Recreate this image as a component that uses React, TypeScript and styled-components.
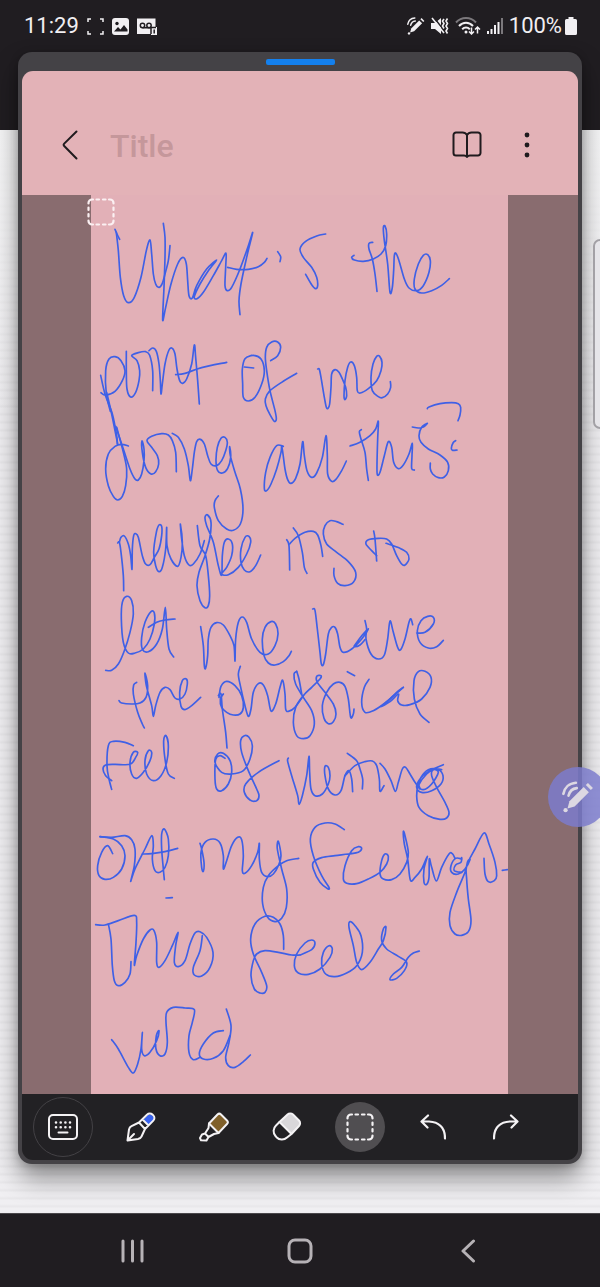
import React from "react";
import styled, { createGlobalStyle } from "styled-components";

const GlobalStyle = createGlobalStyle`
  *, *::before, *::after { box-sizing: border-box; }
  body { margin: 0; font-family: Roboto, "Noto Sans", sans-serif; background: #201d21; }
  button { border: 0; margin: 0; padding: 0; background: none; color: inherit; font: inherit; }
  svg { display: block; }
`;

const Screen = styled.div`
  position: relative;
  display: flex;
  flex-direction: column;
  min-height: 100vh;
  overflow: hidden;
  background:
    linear-gradient(#201d21, #201d21) top / 100% 130px no-repeat,
    linear-gradient(#f6f6f7 130px, rgba(246, 246, 247, 0) 420px),
    repeating-linear-gradient(#f0eff2 0 4px, #e9e8eb 6px 7px, #f0eff2 8px);
`;

const StatusBar = styled.header`
  display: flex;
  align-items: center;
  justify-content: space-between;
  height: 52px;
  padding: 0 23px 0 24px;
  color: #f1eff2;
  font-size: 22px;
  line-height: 26px;
`;

const StatusGroup = styled.div<{ $gap: number }>`
  display: flex;
  align-items: center;
  gap: ${(p) => p.$gap}px;
`;

const Battery = styled.span`
  display: flex;
  align-items: center;
  gap: 3px;
`;

const PopupWindow = styled.main`
  flex: 1;
  display: flex;
  flex-direction: column;
  margin: 0 18px;
  padding: 0 4px 4px;
  border-radius: 14px;
  background: #444246;
  box-shadow: 0 14px 26px rgba(0, 0, 0, 0.42), 0 2px 10px rgba(0, 0, 0, 0.2);
`;

const DragStrip = styled.div`
  display: flex;
  align-items: center;
  justify-content: center;
  height: 19px;
`;

const DragHandle = styled.span`
  width: 69px;
  height: 6px;
  border-radius: 2px;
  background: #1480ee;
`;

const NoteHeader = styled.div`
  display: flex;
  align-items: center;
  gap: 20px;
  height: 124px;
  padding: 24px 31px 0 28px;
  border-radius: 11px 11px 0 0;
  background: #e3b2b7;
  color: #201b1e;
`;

const HeaderButton = styled.button`
  display: grid;
  place-items: center;
  flex: 0 0 40px;
  height: 44px;
`;

const TitleInput = styled.input`
  flex: 1;
  min-width: 0;
  padding: 2px 0 0;
  border: 0;
  outline: 0;
  background: none;
  color: #201b1e;
  font: 500 32px/40px Roboto, sans-serif;
  &::placeholder { color: #c5979b; opacity: 1; }
`;

const Canvas = styled.section`
  flex: 1;
  display: grid;
  grid-template-columns: 69px 1fr 70px;
  background: #896c6f;
`;

const Paper = styled.div`
  position: relative;
  grid-column: 2;
  background: #e2b0b7;
`;

const SelectionMark = styled.span`
  position: absolute;
  top: 3px;
  left: -4px;
  color: #fbf0f2;
`;

const InkLayer = styled.svg`
  width: 100%;
  height: auto;
`;

const Toolbar = styled.div`
  display: flex;
  align-items: center;
  gap: 23px;
  height: 66px;
  padding: 0 11px;
  border-radius: 0 0 11px 11px;
  background: #222124;
  color: #f4f2f4;
`;

const ToolButton = styled.button<{ $active?: boolean }>`
  display: grid;
  place-items: center;
  flex: 0 0 50px;
  height: 50px;
  border-radius: 50%;
  background: ${(p) => (p.$active ? "#504e51" : "none")};
`;

const KeyboardButton = styled(ToolButton)`
  flex-basis: 60px;
  height: 60px;
  border: 1px solid #434145;
`;

const NavBar = styled.nav`
  display: flex;
  justify-content: center;
  height: 74px;
  margin-top: 49px;
  border-top: 1px solid #4a474b;
  background: #201d21;
  color: #b6b2b6;
`;

const NavButton = styled.button`
  display: grid;
  place-items: center;
  flex: 0 0 28%;
`;

const EdgeHandle = styled.div`
  position: absolute;
  top: 239px;
  right: -8px;
  width: 15px;
  height: 190px;
  border: 2px solid #a3a1a6;
  border-radius: 7px;
  background: #e6e5e9;
`;

const AirCommand = styled.button`
  position: absolute;
  top: 767px;
  right: -8px;
  display: grid;
  place-items: center;
  width: 60px;
  height: 60px;
  border-radius: 50%;
  background: rgba(124, 124, 205, 0.84);
  color: #dcd8e2;
`;

/* Ink strokes are sampled at three units per page pixel, each line from its own origin. */
type InkLine = { x: number; y: number; strokes: string[] };

const ink: InkLine[] = [
  {
    x: -6, y: 19, strokes: [
      "90,46 96,60 104,76",
      "94,56 100,110 106,190 116,245 130,266 148,250 168,190 184,110 195,78 200,120 205,180 212,210 222,220 232,208 240,180 250,140 255,95",
      "235,28 240,70 240,130 237,220 233,318 242,280 258,210 278,150 294,130 304,150 308,200 312,245 322,252 335,215 365,165 395,138 370,170 345,210 328,248 336,254 355,235 385,185 410,140 423,118 422,160 420,215 427,230 440,220 465,165 490,95 503,56 485,130 468,210 462,260 465,302",
      "428,160 455,166 490,166 520,158 538,145 546,133",
      "578,113 587,128 585,143",
      "47,484 60,540 82,600 95,665 97,690",
      "76,592 64,540 62,470 72,435 90,428 108,440 120,470 112,500 90,532 62,543 48,536",
      "124,412 124,470 126,525 137,549 152,535 162,500 164,470 156,440 140,425 160,416 182,413 194,424 203,470 203,530",
      "192,410 203,402 214,412 222,450 226,500 228,540 232,510 240,450 252,408 262,403 270,420 276,465 284,500 293,508 305,495 320,450 328,393 332,430 338,500 343,570",
      "272,482 300,478 350,461 425,445",
      "506,462 478,459",
      "500,424 480,434 472,465 473,510 475,550 490,561 510,550 530,510 538,470 528,435 505,424 485,430",
      "557,440 578,425 587,400 578,384 560,384 545,400 541,430 545,470 555,530 570,590 574,615 568,622 555,602 543,575 541,555 553,532 590,505 635,478",
    ],
  },
  {
    x: 194, y: 19, strokes: [
      "122,60 95,66 62,82 45,105 55,130 80,160 95,190 98,215 92,224 80,212 62,181",
      "207,124 200,130 208,138 235,142 265,135 288,120 302,95 305,60 300,36 295,42 298,80 308,150 315,235 322,220 326,170 328,125 333,118 342,140 358,195 372,222 395,230 415,215 432,175 436,140 428,122 415,124 400,150 388,195 390,225 410,237 440,230 470,214 493,194",
      "263,85 252,88 252,105 262,135 270,180 276,232",
      "98,465 103,466 108,490 118,550 124,580 129,583 134,570 138,520 140,480 150,467 162,475 172,495 182,520 185,545 180,557 177,545 180,500 188,460 197,444 208,455 215,490 217,530 226,537 250,524 275,500 288,470 291,445 284,427 275,427 264,450 258,490 262,530 280,548 292,551 308,540 317,520 316,503",
    ],
  },
  {
    x: -6, y: 194, strokes: [
      "65,10 80,75 98,165",
      "92,112 115,180 135,240 150,270 160,273 170,255 177,215 177,180 171,156 172,190 182,235 198,255 212,248 221,225 217,200 200,175 186,155 200,142 230,134 250,138 262,155 272,190 274,248",
      "130,171 110,166 90,172 70,195 62,240 70,290 85,322 98,333 112,322 122,290 125,240 115,190 95,115",
      "262,133 280,145 298,180 310,230 316,275 322,240 328,190 335,158 346,151 358,165 368,200 378,225 395,230 410,215 422,185 427,160 420,145 408,148 397,175 393,215 398,245 412,252 428,238 437,205 434,173 436,200 450,250 466,300 474,360 466,405 445,424 425,420 400,395 388,355 390,335 400,321",
      "98,462 103,460 108,490 115,560 116,605",
      "103,460 108,445 118,441 130,465 137,500 141,541 142,480 146,440 152,434 160,445 172,500 182,525 195,527 208,505 222,480 230,440 230,412 222,408 214,430 206,490 212,530 222,548 232,535 242,480 245,415 246,470 258,510 278,532 288,505 292,460 286,405 290,450 298,500 312,528 325,525 345,495 358,455",
      "337,410 345,470 362,500 370,560 374,620 370,650 360,656 345,635 336,590 342,550 360,500 374,450 378,400 368,378 360,385 365,410 385,460 400,530 410,558 412,500 418,460 430,450 442,465 440,500 425,535 410,555 430,557 460,535 485,495 497,460 492,442 480,445 468,480 468,520 478,543 495,548 512,530 527,498",
    ],
  },
  {
    x: 194, y: 194, strokes: [
      "-5,172 -25,170 -45,205 -58,250 -62,298 -55,305 -42,285 -25,240 -12,190 -10,172 -6,195 0,240 8,272 18,283 32,268 45,225 53,158 58,200 66,245 80,265 95,252 112,205 123,140 127,200 128,255 140,277 152,272 170,245 184,216",
      "195,171 225,160 255,140 272,120 280,97 278,150 276,225 277,257 285,250 298,200 310,158 320,175 326,220 340,239 355,228 372,195 382,163 381,200 380,238 388,243",
      "229,122 223,128 228,150 240,190 245,240 250,274",
      "382,114 400,117 415,114 427,103 410,115 402,140 408,160 430,180 465,198 488,220 490,245 478,264 460,266 443,255 436,240 436,222",
      "427,59 432,54 465,44 500,41 520,44 527,55 525,78 519,95",
      "512,155 504,162 499,178 503,184 516,183",
      "5,452 12,470 14,543",
      "14,465 30,448 60,430 85,427 98,438 108,470 113,502",
      "25,417 40,440 52,490 58,535 66,553",
      "174,406 155,398 135,395 120,410 115,435 125,465 155,490 190,518 212,550 205,580 180,590 158,583 147,560 147,538",
      "266,426 270,450 275,516",
      "275,500 260,485 243,465 250,452 280,448 305,450 320,465 335,500 350,525 360,528 372,510 365,490 345,478 303,463",
    ],
  },
  {
    x: -6, y: 404, strokes: [
      "62,214 80,214 100,195 118,155 135,100 145,45 140,5 125,-8 112,10 109,60 115,130 130,162 150,162 175,150 195,120 208,75 208,42 198,38 180,70 170,115 172,150 190,158 215,135 232,90 241,25 245,90 252,150 266,174",
      "190,85 215,70 240,63 270,60",
      "347,83 355,140 358,200 362,207 368,170 370,120 378,85 395,71 415,78 435,110 447,140 450,186 452,120 460,70 472,54 485,70 500,120 525,160 550,165 570,140 579,105 572,75 558,68 540,85 532,120 537,170 550,192 570,198 595,188 612,170 619,157",
      "155,250 146,258 145,285 158,340 172,375 178,387",
      "102,305 110,312 140,315 165,312 183,295 188,260 180,222 184,260 200,320 205,352 212,320 225,280 240,265 255,272 270,297 285,300 300,285 307,255 304,240 292,245 284,280 288,322 300,332 320,320 347,295",
      "400,290 408,285 412,330 422,400 426,447",
      "415,285 406,300 410,325 425,340 445,348 465,345 475,325 470,290 450,260 425,247 408,262 402,295",
      "466,202 460,225 466,260 480,320 490,352 498,330 505,280 520,254 535,258 548,290 558,336 572,315 585,265 593,244 600,285 602,330 610,337 630,325 655,290",
      "145,440 120,430 85,427 70,440 66,500 72,540 80,571",
      "80,545 62,530 54,510 62,498 90,496 135,496 152,475 158,460 145,460 135,490 140,525 155,538 175,520 195,485 200,460 190,455 180,485 185,525 205,545 228,530 245,490 250,440 243,410 236,425 240,480 250,525 268,538",
      "420,478 405,470 392,482 390,540 395,570 410,575 430,555 440,520 435,485 415,463 398,465 390,490 410,520 440,525 475,515 495,480 502,440 492,415 478,410 467,425 470,460 490,515 515,570 522,590 515,605 495,603 478,580 482,555 520,520 582,485",
    ],
  },
  {
    x: 194, y: 404, strokes: [
      "83,30 90,34 97,90 105,160 109,195 115,197 122,165 130,105 140,85 150,85 158,105 165,145 175,160 200,150 230,120 250,90 232,108 212,135 208,143 225,138 240,122",
      "240,65 245,90 243,120 258,165 280,180 298,168 308,120 315,66 325,100 338,145 347,152 360,120 372,70 378,60 383,77",
      "395,102 420,100 445,75 445,55 428,52 408,65 397,95 405,130 430,147 455,143 475,124",
      "35,217 27,225 32,255 55,295 80,335 88,375 75,410 55,419 35,410 25,370 32,325 55,290 80,265 105,240 108,230 95,232 97,250 120,280 145,315 153,345 145,368 130,374 117,358 112,320 125,280 145,255 165,250 180,262 190,300 197,355 205,345 207,330",
      "35,217 42,240 50,285",
      "187,218 209,230",
      "252,241 238,265 230,310 240,340 265,335 300,312 355,265",
      "355,265 335,280 310,305 288,323 315,308 340,285 338,305 350,318 375,317 410,300 435,265 438,235 420,217 400,218 387,245 388,300 405,345 432,370",
      "10,477 8,487 20,530 38,590 42,616 52,590 65,530 72,472 74,520 78,570 90,590 112,585 130,555 135,530 130,505 120,502 120,530 130,570 150,588 168,575 180,530 192,515 200,540 203,578",
      "180,530 210,500 240,488 262,486 275,500 283,540 285,577 297,560",
      "187,463 215,485 225,510 233,540 232,570",
      "285,493 300,510 318,545 331,577 340,550 352,510 362,505 375,525 390,550 405,570",
      "475,497 430,518 405,540 395,565 410,580 440,575 468,555 474,530 460,512 430,512 408,535 402,560 415,572 440,555 460,520 445,512 440,530 455,565 480,610 492,640 485,657 465,661 430,650 402,625 395,590 400,560 425,525 450,510 470,512",
    ],
  },
  {
    x: -6, y: 624, strokes: [
      "45,53 85,60 110,80 120,110 110,150 85,175 60,181 42,170 38,140 50,100 68,80 83,104",
      "45,53 80,55 120,50 140,62 150,90 148,140 137,187 150,150 180,90 200,50 205,80 202,120 210,155 225,160 240,145 250,110 250,60 238,30 230,45 230,90 235,150 238,182",
      "172,105 200,104 240,98 278,88",
      "345,73 350,90 357,130 355,157 350,145 348,100 360,70 385,60 405,72 415,110 415,150 425,125 440,80 458,55 470,62 475,110 472,155 480,163 500,140 518,100 523,73 523,120 530,160 548,173 565,165 580,140 588,110 580,67 577,90 590,150 605,210 604,265 590,298 570,308 548,295 533,255 535,205 550,170 580,140 605,125 641,118",
      "243,237 262,236",
      "32,317 60,318 100,305 148,289 155,310 153,370 148,438 155,410 175,360 195,333 207,335 215,370 215,430 222,445 240,425 262,380 279,340 272,380 268,430 280,443 300,425 315,375 330,342 345,338 365,355 384,400 375,445 350,471 328,468 325,445 345,395 352,350",
      "70,315 78,360 82,440 88,485 100,500 120,490 135,465 138,428",
      "596,391 595,350 585,315 565,295 540,292 510,315 497,360 505,405 530,460 545,500 540,520 525,522 508,510 498,470 505,425 515,405 540,395 580,400 620,408 645,408",
      "80,662 100,690 130,745 145,762 158,735 168,690 172,640 170,690 178,710 195,700 215,665 222,635 214,650 213,690 225,710 240,705 247,670 243,610 245,580 265,565 300,567 328,572 322,610 312,650 312,700 325,722 345,715",
      "415,635 385,642 355,675 343,705 355,720 385,718 415,695 435,650",
      "424,570 438,620 432,670 422,715 430,740 450,745 475,728 496,708",
    ],
  },
  {
    x: 194, y: 624, strokes: [
      "178,32 150,15 120,12 90,25 76,60 85,110 110,170 132,205 128,209 105,190 85,150 85,130 110,116 150,110 190,105 220,100 230,88 220,83 200,95 180,140 175,180 185,193 215,194 250,180 285,160 305,135 310,112 300,105 290,125 285,165 295,180 320,182 345,165 365,130 370,100 360,50 355,38 358,75 368,120 376,183 390,175 410,150 427,112 417,150 417,190 425,196 432,175 433,120 440,145 454,186 470,145 492,105 502,104 510,118",
      "530,120 512,118 498,140 500,160 520,165 540,150 555,122 548,128 540,160 515,220 495,280 495,320 510,345 530,349 550,338 558,305 550,240 545,180 545,140 570,90 597,42 612,75 630,130 635,170 628,185 610,188 600,165 597,118",
      "530,116 528,130 512,138 508,155 530,160",
      "652,154 667,152",
      "45,408 80,392 90,372 80,363 60,372 35,405 28,440 40,462 70,466 105,450 135,415 142,390 132,380 115,400 110,435 122,465 150,473 185,462 215,440 232,400 228,350 210,320 195,308 192,325 205,380 215,430 230,452 255,430 280,390 295,365 303,325 295,330 290,365 305,390 340,412 365,430 358,455 335,478 315,482 325,465 350,445 370,415 385,402 403,396",
    ],
  },
];

/* Joins the sampled points by a Catmull-Rom curve. */
function smooth(stroke: string): string {
  const p = stroke.split(" ").map((s) => s.split(",").map(Number));
  let d = `M${p[0][0]} ${p[0][1]}`;
  for (let i = 0; i < p.length - 1; i++) {
    const a = p[Math.max(i - 1, 0)];
    const b = p[i];
    const c = p[i + 1];
    const e = p[Math.min(i + 2, p.length - 1)];
    const at = (k: number) =>
      `${(b[k] + (c[k] - a[k]) / 6).toFixed(1)}`;
    const to = (k: number) =>
      `${(c[k] - (e[k] - b[k]) / 6).toFixed(1)}`;
    d += `C${at(0)} ${at(1)} ${to(0)} ${to(1)} ${c[0]} ${c[1]}`;
  }
  return d;
}

const Handwriting = () => (
  <InkLayer
    viewBox="0 0 417 899"
    role="img"
    aria-label="Handwritten note"
    fill="none"
    stroke="#3f60e6"
    strokeWidth="5"
    strokeLinecap="round"
    strokeLinejoin="round"
  >
    {ink.map((line, i) => (
      <g key={i} transform={`translate(${line.x} ${line.y}) scale(0.33333)`}>
        {line.strokes.map((s, j) => (
          <path key={j} d={smooth(s)} />
        ))}
      </g>
    ))}
  </InkLayer>
);

const DashedSquare = () => (
  <svg width="28" height="28" viewBox="0 0 28 28" fill="none" stroke="currentColor" strokeWidth="2.2" strokeLinecap="round">
    <path d="M1.5 5.5V5A3.5 3.5 0 0 1 5 1.5h1M22 1.5h1A3.5 3.5 0 0 1 26.5 5v.5M26.5 22.5v.5a3.5 3.5 0 0 1-3.500 3.500h-1M6 26.500H5A3.500 3.500 0 0 1 1.500 23v-.5" />
    <path d="M9.500 1.500h2.500M16 1.500h2.500M9.500 26.500h2.500M16 26.500h2.500M1.500 9.500v2.500M1.500 16v2.500M26.500 9.500v2.500M26.500 16v2.500" />
  </svg>
);

const StylusIcon = ({ size }: { size: number }) => (
  <svg width={size} height={size} viewBox="0 0 18 18" fill="none" stroke="currentColor">
    <path d="M4.200 11.400 12.200 3.400l2.900 2.900-8 8-4 1.200z" fill="currentColor" stroke="none" />
    <path d="m13.400 2.300 1.200-1.200 2.800 2.800-1.200 1.200z" fill="currentColor" stroke="none" />
    <circle cx="2" cy="16.400" r="1.200" fill="currentColor" stroke="none" />
    <path d="M.8 7.200C1.400 3.800 4 1.300 7.800 1M3.700 8.200C4.200 6 5.800 4.300 8.300 4" strokeWidth="1.500" strokeLinecap="round" />
  </svg>
);

export default function App() {
  return (
    <>
      <GlobalStyle />
      <Screen>
        <StatusBar>
          <StatusGroup $gap={8}>
            <time>11:29</time>
            <svg width="17" height="17" viewBox="0 0 17 17" fill="none" stroke="currentColor" strokeWidth="1.500">
              <path d="M1 4V1h3M13 1h3v3M16 13v3h-3M4 16H1v-3" />
            </svg>
            <svg width="17" height="17" viewBox="0 0 17 17">
              <rect width="17" height="17" rx="3" fill="currentColor" />
              <circle cx="5" cy="5.500" r="1.700" fill="#201d21" />
              <path d="M2 13.500 6 9l2.500 2.500L12 7l3.500 4.500v2z" fill="#201d21" />
            </svg>
            <svg width="20" height="17" viewBox="0 0 20 17" fill="none">
              <path d="M0 .5h18.500V9H20v8h-6v-1H0z" fill="currentColor" />
              <g stroke="#201d21" strokeWidth="1.500">
                <circle cx="5.500" cy="7.500" r="2.200" />
                <circle cx="12" cy="7.500" r="2.200" />
                <path d="M5.500 9.700H14M14 16V9.500h5" />
                <path d="M17.200 11.500v4" />
              </g>
            </svg>
          </StatusGroup>
          <StatusGroup $gap={6}>
            <StylusIcon size={18} />
            <svg width="18" height="18" viewBox="0 0 18 18" fill="none" stroke="currentColor" strokeWidth="1.600">
              <path d="M0 6h4l6-5v16l-6-5H0z" fill="currentColor" stroke="none" />
              <path d="m2.500 0 11 14" stroke="#201d21" strokeWidth="1.500" />
              <path d="m1 1 12 15M13 2l-1.500 2L13 6.500 11.500 9l1.500 2.500M16.500 1.500 15 4l1.500 2.500L15 9l1.500 2.500L15 14l1.500 2.500" />
            </svg>
            <svg width="26" height="18" viewBox="0 0 26 18" fill="none" stroke="currentColor" strokeWidth="2">
              <path d="M1 5.500C6.500-.5 15.500-.5 21 5.500" stroke="#7b787c" />
              <path d="M4 9c4-4.500 10-4.500 14 0M7.200 12.200c2.200-2.300 5.400-2.300 7.600 0" />
              <circle cx="11" cy="15" r="1.500" fill="currentColor" stroke="none" />
              <path d="M16.500 10.500V17m-2.500-2.500 2.500 2.500 2.500-2.500M22.500 16.500V10m-2.500 2.500 2.500-2.500 2.500 2.500" strokeWidth="1.500" />
            </svg>
            <svg width="16" height="16" viewBox="0 0 16 16" stroke="currentColor" strokeWidth="2">
              <path d="M1 16v-3M4.500 16v-5M8 16V7M11.500 16V4" />
              <path d="M15 16V0" stroke="#7b787c" />
            </svg>
            <Battery>
              100%
              <svg width="12" height="18" viewBox="0 0 12 18" fill="currentColor">
                <path d="M3.500 0h5v2h2A1.500 1.500 0 0 1 12 3.500v13a1.500 1.500 0 0 1-1.500 1.500h-9A1.500 1.500 0 0 1 0 16.500v-13A1.500 1.500 0 0 1 1.500 2h2z" />
              </svg>
            </Battery>
          </StatusGroup>
        </StatusBar>

        <PopupWindow>
          <DragStrip>
            <DragHandle />
          </DragStrip>
          <NoteHeader>
            <HeaderButton aria-label="Back">
              <svg width="16" height="30" viewBox="0 0 16 30" fill="none" stroke="currentColor" strokeWidth="2" strokeLinecap="round" strokeLinejoin="round">
                <path d="M14.500 1.500 2.200 13.600q-1.200 1.200 0 2.400l12.300 12.500" />
              </svg>
            </HeaderButton>
            <TitleInput aria-label="Title" placeholder="Title" />
            <HeaderButton aria-label="Reading mode">
              <svg width="30" height="28" viewBox="0 0 30 28" fill="none" stroke="currentColor" strokeWidth="2" strokeLinejoin="round" strokeLinecap="round">
                <path d="M15 4Q13.500 1.500 10.500 1.500H4A2.500 2.500 0 0 0 1.500 4v18A2.500 2.500 0 0 0 4 24.500h8q2 0 3 1.500 1-1.500 3-1.500h8a2.500 2.500 0 0 0 2.500-2.500V4A2.500 2.500 0 0 0 26 1.500h-6.500Q16.500 1.500 15 4zM15 4v22" />
              </svg>
            </HeaderButton>
            <HeaderButton aria-label="More options">
              <svg width="6" height="26" viewBox="0 0 6 26" fill="currentColor">
                <circle cx="3" cy="3" r="2.400" />
                <circle cx="3" cy="13" r="2.400" />
                <circle cx="3" cy="23" r="2.400" />
              </svg>
            </HeaderButton>
          </NoteHeader>

          <Canvas>
            <Paper>
              <Handwriting />
              <SelectionMark>
                <DashedSquare />
              </SelectionMark>
            </Paper>
          </Canvas>

          <Toolbar>
            <KeyboardButton aria-label="Keyboard">
              <svg width="30" height="26" viewBox="0 0 30 26" fill="none" stroke="currentColor" strokeWidth="2" strokeLinecap="round">
                <rect x="1" y="1" width="28" height="24" rx="4" />
                <path d="M10.500 18.500h9" />
                <path d="M8 8.500h.01M12.700 8.500h.01M17.400 8.500h.01M22 8.500h.01M8 13.300h.01M12.700 13.300h.01M17.400 13.300h.01M22 13.300h.01" strokeWidth="2.600" />
              </svg>
            </KeyboardButton>
            <ToolButton aria-label="Pen">
              <svg width="30" height="30" viewBox="0 0 30 30" fill="none" stroke="currentColor" strokeWidth="2" strokeLinecap="round" strokeLinejoin="round">
                <path d="m17.500 7.500 4.500-4.500q2-1.200 3.500 0l2 2q1 1.500 0 3.500l-5 5z" fill="#3862f0" stroke="none" />
                <path d="m13 10.500 8.200-8a3.600 3.600 0 0 1 5.200 0l.9.900a3.600 3.600 0 0 1 0 5.200L19 17M16.300 7.300l6.200 6.200M13 10.500l6 6.500M13 10.500l-7.500 3.700q-2 1-2.500 3.300L1.500 28.500l10.500-1.500q2.500-.5 3.500-2.500L19 17M1.500 28.500l6.500-6.500" />
              </svg>
            </ToolButton>
            <ToolButton aria-label="Highlighter">
              <svg width="30" height="30" viewBox="0 0 30 30" fill="none" stroke="currentColor" strokeWidth="2" strokeLinecap="round" strokeLinejoin="round">
                <path d="m10 11.500 8.500-9a2.500 2.500 0 0 1 3.500 0l6 6a2.500 2.500 0 0 1 0 3.500L19.500 21z" fill="#80602a" />
                <path d="M10 11.500 9.500 16l-3.500 5.500 3.500 3.500 5.500-3 4.500-1M6 21.500 3 22.500l-2 3.500 1 2.300 5.500.2 2-3.500" />
              </svg>
            </ToolButton>
            <ToolButton aria-label="Eraser">
              <svg width="30" height="30" viewBox="0 0 30 30" fill="none" stroke="currentColor" strokeWidth="2" strokeLinejoin="round">
                <path d="m7.500 10 8-7.500a4 4 0 0 1 5.500 0l6 6a4 4 0 0 1 0 5.500L19.500 22z" fill="#d9d7da" />
                <path d="M7.500 10 4 13.500a7.500 7.500 0 0 0-.5 10.500l1 1.200a7.500 7.500 0 0 0 10.500.3l4.500-3.500" />
              </svg>
            </ToolButton>
            <ToolButton aria-label="Selection" $active>
              <DashedSquare />
            </ToolButton>
            <ToolButton aria-label="Undo">
              <svg width="26" height="26" viewBox="0 0 26 26" fill="none" stroke="currentColor" strokeWidth="2.200" strokeLinecap="round" strokeLinejoin="round">
                <path d="M8 1.500 1.500 7.500 7.500 13.500M2 7.500H9Q25 8.500 25 24.500" />
              </svg>
            </ToolButton>
            <ToolButton aria-label="Redo">
              <svg width="26" height="26" viewBox="0 0 26 26" fill="none" stroke="currentColor" strokeWidth="2.200" strokeLinecap="round" strokeLinejoin="round">
                <path d="m18 1.500 6.500 6-6 6M24 7.500H17Q1 8.500 1 24.500" />
              </svg>
            </ToolButton>
          </Toolbar>
        </PopupWindow>

        <NavBar>
          <NavButton aria-label="Recent apps">
            <svg width="24" height="24" viewBox="0 0 24 24" stroke="currentColor" strokeWidth="3" strokeLinecap="round">
              <path d="M3 2v20M12.500 2v20M22 2v20" />
            </svg>
          </NavButton>
          <NavButton aria-label="Home">
            <svg width="26" height="26" viewBox="0 0 26 26" fill="none" stroke="currentColor" strokeWidth="3">
              <rect x="2" y="2" width="22" height="22" rx="6" />
            </svg>
          </NavButton>
          <NavButton aria-label="Go back">
            <svg width="16" height="24" viewBox="0 0 16 24" fill="none" stroke="currentColor" strokeWidth="3" strokeLinecap="round" strokeLinejoin="round">
              <path d="M13.500 2 3 12l10.500 10" />
            </svg>
          </NavButton>
        </NavBar>

        <EdgeHandle />
        <AirCommand aria-label="Air command">
          <StylusIcon size={32} />
        </AirCommand>
      </Screen>
    </>
  );
}
